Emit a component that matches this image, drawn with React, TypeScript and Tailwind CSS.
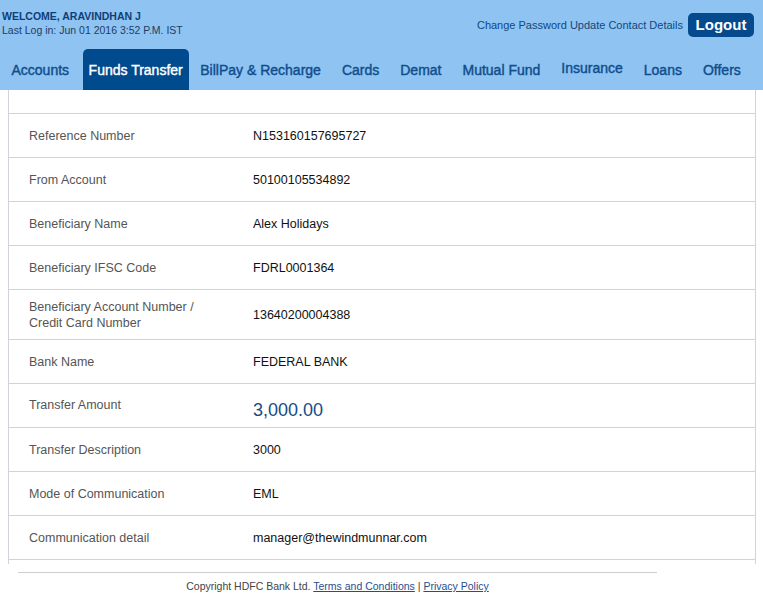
const navItems = [
  'Accounts',
  'Funds Transfer',
  'BillPay & Recharge',
  'Cards',
  'Demat',
  'Mutual Fund',
  'Insurance',
  'Loans',
  'Offers',
]

const rows: { label: string; value: string; amount?: boolean; tall?: boolean }[] = [
  { label: 'Reference Number', value: 'N153160157695727' },
  { label: 'From Account', value: '50100105534892' },
  { label: 'Beneficiary Name', value: 'Alex Holidays' },
  { label: 'Beneficiary IFSC Code', value: 'FDRL0001364' },
  { label: 'Beneficiary Account Number / Credit Card Number', value: '13640200004388', tall: true },
  { label: 'Bank Name', value: 'FEDERAL BANK' },
  { label: 'Transfer Amount', value: '3,000.00', amount: true },
  { label: 'Transfer Description', value: '3000' },
  { label: 'Mode of Communication', value: 'EML' },
  { label: 'Communication detail', value: 'manager@thewindmunnar.com' },
]

export default function App() {
  return (
    <div className="w-[763px] h-[598px] overflow-hidden bg-white font-['Liberation_Sans',Arial,sans-serif]">
      {/* header */}
      <div className="bg-[#8fc3f1] h-[90px] flex flex-col">
        <div className="flex justify-between h-[49px]">
          <div className="pl-[2px] pt-[9px] text-[10.5px] leading-[14px] text-[#0d3f78]">
            <div className="font-bold">WELCOME, ARAVINDHAN J</div>
            <div className="text-[#1d3d66]">Last Log in: Jun 01 2016 3:52 P.M. IST</div>
          </div>
          <div className="flex items-start pt-[13px] pr-[9px]">
            <span className="text-[11px] leading-[24px] text-[#11487f] mr-[5px]">
              Change Password Update Contact Details
            </span>
            <button className="h-[24px] w-[66px] rounded-[5px] bg-[#044a8c] text-white font-bold text-[15px] leading-[24px]">
              Logout
            </button>
          </div>
        </div>
        <nav className="flex items-stretch flex-1 pl-[1px] whitespace-nowrap">
          {navItems.map((item) =>
            item === 'Funds Transfer' ? (
              <div
                key={item}
                className="bg-[#004a8e] rounded-t-[5px] px-[6px] ml-[3px] mr-[1px] text-white text-[14px] [-webkit-text-stroke:0.4px_white] flex items-center pt-[2px]"
              >
                {item}
              </div>
            ) : (
              <div
                key={item}
                className={`px-[10.5px] text-[#0f4d8c] text-[14px] [-webkit-text-stroke:0.4px_#0f4d8c] flex items-center ${item === 'Insurance' ? 'pb-[2px]' : 'pt-[2px]'}`}
              >
                {item}
              </div>
            )
          )}
        </nav>
      </div>

      {/* details table */}
      <div className="mx-[8px] border-x border-[#d2d2da] w-[748px]">
        <div className="h-[24px] border-b border-[#d2d2da]" />
        {rows.map((row) => (
          <div
            key={row.label}
            className={`flex border-b border-[#d2d2da] ${row.tall ? 'h-[50px]' : 'h-[44px]'}`}
          >
            <div
              className={`w-[244px] pl-[20px] text-[12.5px] leading-[16px] text-[#555] flex ${row.amount ? 'items-start pt-[13px]' : 'items-center'}`}
            >
              <span className={row.tall ? 'w-[190px]' : ''}>{row.label}</span>
            </div>
            <div
              className={`flex items-center pt-[1px] ${row.amount ? 'text-[18px] text-[#164c86] pt-[9px]' : 'text-[12.5px] text-[#111]'}`}
            >
              {row.value}
            </div>
          </div>
        ))}
        <div className="h-[4px]" />
      </div>

      {/* footer */}
      <div className="ml-[18px] w-[639px]">
        <div className="border-t border-[#cfcfcf] mt-[8px]" />
        <div className="text-center text-[10.5px] text-[#444] pt-[6px]">
          Copyright HDFC Bank Ltd.{' '}
          <a className="underline text-[#1f4f8f]">Terms and Conditions</a> |{' '}
          <a className="underline text-[#1f4f8f]">Privacy Policy</a>
        </div>
      </div>
    </div>
  )
}
